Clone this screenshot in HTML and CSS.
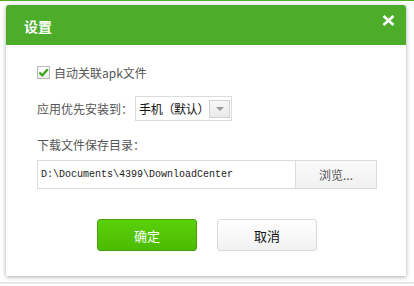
FILE: index.html
```html
<!DOCTYPE html>
<html lang="zh">
<head>
<meta charset="utf-8">
<link rel="stylesheet" href="styles.css">
</head>
<body>
<div class="topline"></div>
<div class="dialog">
  <div class="header">
    <span class="title">设置</span>
    <span class="close">
      <svg width="13" height="11" viewBox="0 0 13 11"><path d="M1.5 1 L11.5 10 M11.5 1 L1.5 10" stroke="#fff" stroke-width="2.6" fill="none"/></svg>
    </span>
  </div>
  <div class="body">
    <label class="row check-row">
      <span class="checkbox">
        <svg width="11" height="11" viewBox="0 0 11 11"><path d="M1.5 5.5 L4.3 8.3 L9.8 2.2" stroke="#3aa81c" stroke-width="2.2" fill="none"/></svg>
      </span>
      <span class="text">自动关联apk文件</span>
    </label>
    <div class="row install-row">
      <span class="text">应用优先安装到：</span>
      <span class="select">
        <span class="select-value">手机（默认）</span>
        <span class="select-btn"><span class="arrow"></span></span>
      </span>
    </div>
    <div class="row dir-label"><span class="text">下载文件保存目录：</span></div>
    <div class="path-box">
      <span class="path">D:\Documents\4399\DownloadCenter</span>
      <span class="browse">浏览...</span>
    </div>
    <div class="actions">
      <button class="btn ok">确定</button>
      <button class="btn cancel">取消</button>
    </div>
  </div>
</div>
<div class="bottomline"></div>
</body>
</html>
```
FILE: styles.css
```css
html, body {
  margin: 0;
  padding: 0;
  background: #fff;
}
body {
  width: 414px;
  height: 286px;
  overflow: hidden;
  font-family: "Noto Sans CJK SC", "Noto Sans", sans-serif;
}
.topline {
  height: 1px;
  background: #4fae2c;
}
.dialog {
  margin: 4px 8px 0 6px;
  width: 400px;
  height: 271px;
  background: #fff;
  border-radius: 3px 3px 0 0;
  box-shadow: 0 1px 4px rgba(0,0,0,0.35);
  display: flex;
  flex-direction: column;
}
.header {
  height: 40px;
  flex: none;
  background: #4dad2b;
  border-radius: 3px 3px 0 0;
  display: flex;
  align-items: center;
  justify-content: space-between;
  padding: 0 11px 0 18px;
}
.title {
  color: #fff;
  font-size: 14px;
  font-weight: bold;
  line-height: 40px;
  padding-top: 1px;
}
.close {
  display: flex;
  align-self: flex-start;
  margin-top: 10px;
}
.body {
  padding: 0 29px 0 31px;
  display: flex;
  flex-direction: column;
  font-size: 12px;
  color: #555;
}
.row {
  display: flex;
  align-items: center;
}
.check-row {
  margin-top: 21px;
  height: 13px;
}
.checkbox {
  width: 11px;
  height: 11px;
  border: 1px solid #b9b9b9;
  background: linear-gradient(#fff, #ececec);
  display: flex;
  align-items: center;
  justify-content: center;
  margin-right: 4px;
}
.text {
  line-height: 13px;
}
.install-row {
  margin-top: 17px;
  height: 25px;
}
.select {
  margin-left: 2px;
  width: 91px;
  height: 23px;
  border: 1px solid #dcdcdc;
  display: flex;
  align-items: center;
  justify-content: space-between;
  padding: 0 1px 0 3px;
  box-sizing: content-box;
}
.select-value {
  font-size: 12px;
  color: #111;
  letter-spacing: -0.3px;
  white-space: nowrap;
}
.select-btn {
  flex: none;
  width: 19px;
  height: 16px;
  background: linear-gradient(#f8f8f8, #e9e9e9);
  border: 1px solid #d0d0d0;
  display: flex;
  align-items: center;
  justify-content: center;
}
.arrow {
  width: 0;
  height: 0;
  border-left: 4px solid transparent;
  border-right: 4px solid transparent;
  border-top: 4px solid #9a9a9a;
}
.dir-label {
  margin-top: 17px;
  height: 13px;
}
.path-box {
  margin-top: 9px;
  height: 27px;
  width: 338px;
  border: 1px solid #dcdcdc;
  display: flex;
}
.path {
  flex: 1;
  font-family: "Liberation Mono", monospace;
  font-size: 10px;
  color: #222;
  line-height: 27px;
  padding-left: 3px;
}
.browse {
  width: 80px;
  border-left: 1px solid #dcdcdc;
  background: linear-gradient(#fbfbfb, #f0f0f0);
  text-align: center;
  line-height: 27px;
  color: #555;
}
.actions {
  margin-top: 30px;
  display: flex;
  gap: 20px;
  padding-left: 60px;
}
.btn {
  width: 100px;
  height: 32px;
  border-radius: 3px;
  font-family: "Noto Sans CJK SC", sans-serif;
  font-size: 13px;
  padding: 0;
  cursor: pointer;
}
.ok {
  background: linear-gradient(#5ad00b, #4cbb00);
  border: 1px solid #4aa20a;
  color: #fff;
}
.cancel {
  background: linear-gradient(#ffffff, #f1f1f1);
  border: 1px solid #d9d9d9;
  color: #111;
}
.bottomline {
  margin-top: 6px;
  height: 2px;
  background: linear-gradient(#e0e0e0, #f0f0f0);
}
```
